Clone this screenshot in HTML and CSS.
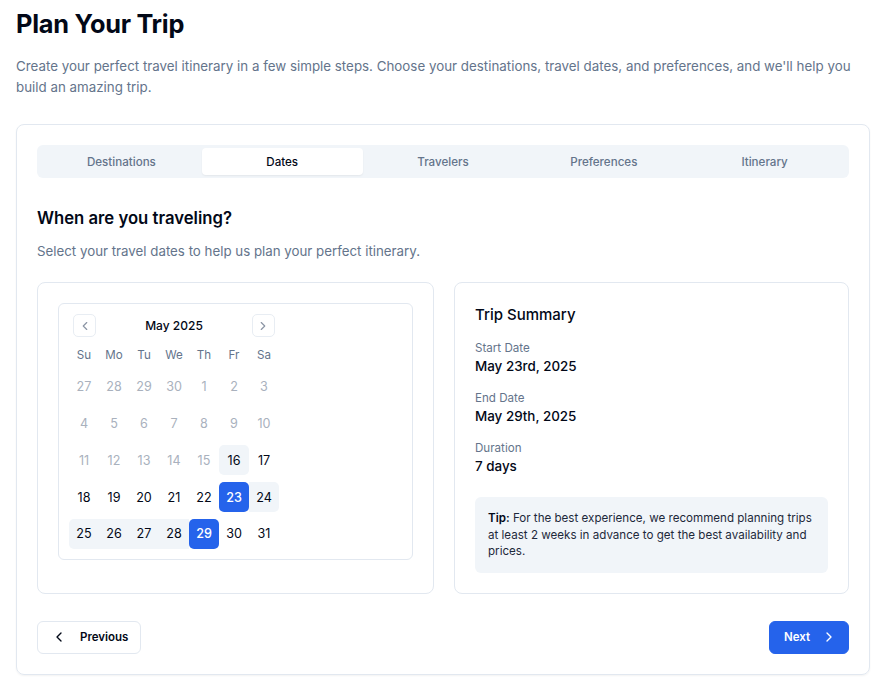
FILE: index.html
```html
<!DOCTYPE html>
<html lang="en">
<head>
<meta charset="utf-8">
<title>Plan Your Trip</title>
<link rel="stylesheet" href="styles.css">
</head>
<body>
<div class="page">
  <h1 class="title">Plan Your Trip</h1>
  <p class="lead">Create your perfect travel itinerary in a few simple steps. Choose your destinations, travel dates, and preferences, and we'll help you build an amazing trip.</p>

  <div class="card">
    <div class="tabs">
      <div class="tab">Destinations</div>
      <div class="tab active">Dates</div>
      <div class="tab">Travelers</div>
      <div class="tab">Preferences</div>
      <div class="tab">Itinerary</div>
    </div>

    <h2 class="section-title">When are you traveling?</h2>
    <p class="section-sub">Select your travel dates to help us plan your perfect itinerary.</p>

    <div class="cols">
      <div class="panel">
        <div class="calendar">
          <div class="month">
            <div class="caption">
              <button class="nav" aria-label="Previous month">
                <svg viewBox="0 0 24 24" width="14" height="14"><path d="M15 18l-6-6 6-6"/></svg>
              </button>
              <span class="caption-label">May 2025</span>
              <button class="nav" aria-label="Next month">
                <svg viewBox="0 0 24 24" width="14" height="14"><path d="M9 18l6-6-6-6"/></svg>
              </button>
            </div>
            <div class="grid">
              <div class="wd">Su</div><div class="wd">Mo</div><div class="wd">Tu</div><div class="wd">We</div><div class="wd">Th</div><div class="wd">Fr</div><div class="wd">Sa</div>

              <div class="day off">27</div><div class="day off">28</div><div class="day off">29</div><div class="day off">30</div><div class="day off">1</div><div class="day off">2</div><div class="day off">3</div>
              <div class="day off">4</div><div class="day off">5</div><div class="day off">6</div><div class="day off">7</div><div class="day off">8</div><div class="day off">9</div><div class="day off">10</div>
              <div class="day off">11</div><div class="day off">12</div><div class="day off">13</div><div class="day off">14</div><div class="day off">15</div><div class="day today">16</div><div class="day">17</div>
              <div class="day">18</div><div class="day">19</div><div class="day">20</div><div class="day">21</div><div class="day">22</div><div class="day sel">23</div><div class="day range range-end">24</div>
              <div class="day range range-start">25</div><div class="day range">26</div><div class="day range">27</div><div class="day range">28</div><div class="day sel">29</div><div class="day">30</div><div class="day">31</div>
            </div>
          </div>
        </div>
      </div>

      <div class="panel summary">
        <h3 class="sum-title">Trip Summary</h3>
        <div class="sum-list">
          <div class="sum-item">
            <div class="sum-label">Start Date</div>
            <div class="sum-value">May 23rd, 2025</div>
          </div>
          <div class="sum-item">
            <div class="sum-label">End Date</div>
            <div class="sum-value">May 29th, 2025</div>
          </div>
          <div class="sum-item">
            <div class="sum-label">Duration</div>
            <div class="sum-value">7 days</div>
          </div>
        </div>
        <p class="tip"><strong>Tip:</strong> For the best experience, we recommend planning trips at least 2 weeks in advance to get the best availability and prices.</p>
      </div>
    </div>

    <div class="actions">
      <button class="btn btn-outline">
        <svg viewBox="0 0 24 24" width="16" height="16"><path d="M15 18l-6-6 6-6"/></svg>
        <span>Previous</span>
      </button>
      <button class="btn btn-primary">
        <span>Next</span>
        <svg viewBox="0 0 24 24" width="16" height="16"><path d="M9 18l6-6-6-6"/></svg>
      </button>
    </div>
  </div>
</div>
</body>
</html>
```

FILE: styles.css
```css
* { box-sizing: border-box; }

html, body {
  margin: 0;
  padding: 0;
  background: #ffffff;
}

body {
  font-family: Inter, "Noto Sans", "Liberation Sans", sans-serif;
  color: #020817;
}

.page {
  width: 870px;
  padding: 8px 0 16px 16px;
}

.title {
  margin: 0;
  font-size: 25.3px;
  line-height: 32px;
  font-weight: 700;
  letter-spacing: -0.01em;
  color: #020817;
}

.lead {
  margin: 16px 0 0;
  font-size: 13.35px;
  line-height: 21px;
  color: #64748b;
}

.card {
  margin-top: 26px;
  width: 854px;
  border: 1px solid #e2e8f0;
  border-radius: 8px;
  box-shadow: 0 1px 2px rgba(0, 0, 0, 0.05);
  padding: 20px;
}

.tabs {
  display: grid;
  grid-template-columns: repeat(5, 1fr);
  background: #f1f5f9;
  border-radius: 6px;
  padding: 3px 4px;
  height: 33px;
}

.tab {
  display: flex;
  align-items: center;
  justify-content: center;
  font-size: 11.6px;
  font-weight: 500;
  color: #64748b;
  border-radius: 4px;
}

.tab.active {
  background: #ffffff;
  color: #020817;
  box-shadow: 0 1px 2px rgba(0, 0, 0, 0.06);
}

.section-title {
  margin: 26px 0 0;
  font-size: 16.7px;
  line-height: 28px;
  font-weight: 600;
}

.section-sub {
  margin: 9px 0 0;
  font-size: 13.3px;
  line-height: 20px;
  color: #64748b;
}

.cols {
  margin-top: 21px;
  display: grid;
  grid-template-columns: 397px 1fr;
  gap: 20px;
}

.panel {
  border: 1px solid #e2e8f0;
  border-radius: 8px;
  padding: 20px;
}

.calendar {
  border: 1px solid #e2e8f0;
  border-radius: 6px;
  padding: 10px;
}

.month {
  width: 210px;
}

.caption {
  display: flex;
  align-items: center;
  justify-content: space-between;
  padding: 0 4px;
  height: 23px;
}

.caption-label {
  font-size: 12px;
  font-weight: 500;
}

.nav {
  width: 23px;
  height: 23px;
  padding: 0;
  border: 1px solid #e8edf3;
  border-radius: 5px;
  background: #fff;
  display: flex;
  align-items: center;
  justify-content: center;
}

.nav svg, .btn svg {
  fill: none;
  stroke: currentColor;
  stroke-width: 2;
  stroke-linecap: round;
  stroke-linejoin: round;
}

.nav svg { color: #8b95a5; }

.grid {
  margin-top: 8px;
  display: grid;
  grid-template-columns: repeat(7, 30px);
  grid-template-rows: 20px repeat(5, 30px);
  row-gap: 6.8px;
}

.wd {
  display: flex;
  align-items: center;
  justify-content: center;
  font-size: 11.6px;
  color: #64748b;
}

.day {
  display: flex;
  align-items: center;
  justify-content: center;
  font-size: 12.6px;
  color: #020817;
}

.day.off { color: #a9b1bd; }

.day.today {
  background: #f1f5f9;
  border-radius: 5px;
}

.day.range { background: #f1f5f9; }
.day.range-start { border-radius: 5px 0 0 5px; }
.day.range-end { border-radius: 0 5px 5px 0; }

.day.sel {
  background: #2563eb;
  color: #ffffff;
  font-weight: 500;
  border-radius: 5px;
}

.sum-title {
  margin: 0;
  font-size: 15px;
  line-height: 24px;
  font-weight: 500;
}

.sum-list {
  margin-top: 13px;
  display: flex;
  flex-direction: column;
  gap: 14px;
}

.sum-label {
  font-size: 11.6px;
  line-height: 16px;
  color: #64748b;
}

.sum-value {
  font-size: 13.4px;
  line-height: 20px;
  font-weight: 500;
}

.tip {
  margin: 21px 0 0;
  background: #f1f5f9;
  border-radius: 6px;
  padding: 13px;
  font-size: 11.6px;
  line-height: 16.5px;
  color: #1e293b;
}

.tip strong { font-weight: 600; color: #020817; }

.actions {
  margin-top: 27px;
  display: flex;
  justify-content: space-between;
}

.btn {
  height: 33px;
  display: flex;
  align-items: center;
  border-radius: 6px;
  font-family: inherit;
  font-size: 11.5px;
  font-weight: 600;
}

.btn-outline {
  gap: 13px;
  padding: 0 12px 0 13px;
  background: #ffffff;
  border: 1px solid #e2e8f0;
  color: #020817;
}

.btn-primary {
  gap: 11px;
  padding: 0 11px 0 14px;
  background: #2563eb;
  border: 1px solid #2563eb;
  color: #ffffff;
}
```
